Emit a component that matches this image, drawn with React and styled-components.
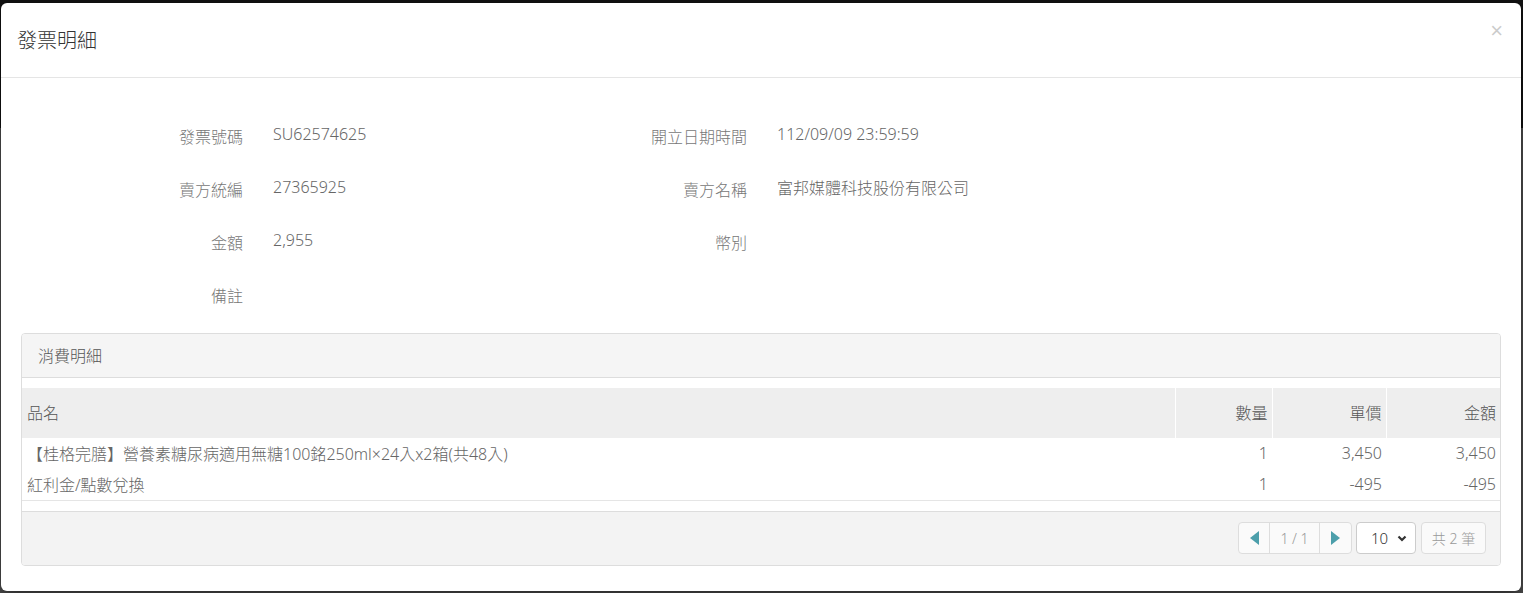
import styled, { createGlobalStyle } from "styled-components";

const GlobalStyle = createGlobalStyle`
  html, body {
    margin: 0;
    padding: 0;
  }
  body {
    background: linear-gradient(#121212 0, #121212 128px, #4e4e4e 128px);
    font-family: "Noto Sans", "Noto Sans CJK TC", sans-serif;
    font-weight: 300;
    color: #666;
  }
  * {
    box-sizing: border-box;
  }
`;

const info = [
  ["發票號碼", "SU62574625", "開立日期時間", "112/09/09 23:59:59"],
  ["賣方統編", "27365925", "賣方名稱", "富邦媒體科技股份有限公司"],
  ["金額", "2,955", "幣別", ""],
  ["備註", "", "", ""],
];

const items = [
  { name: "【桂格完膳】營養素糖尿病適用無糖100銘250ml×24入x2箱(共48入)", qty: 1, price: "3,450", amount: "3,450" },
  { name: "紅利金/點數兌換", qty: 1, price: "-495", amount: "-495" },
];

const App = () => {
  return (
    <>
      <GlobalStyle />
      <Backdrop>
        <Modal>
          <Header>
            <Title>發票明細</Title>
            <Close>×</Close>
          </Header>
          <Body>
            <InfoGrid>
              {info.map((row, i) => (
                <InfoRow key={i}>
                  <Label>{row[0]}</Label>
                  <Value>{row[1]}</Value>
                  <Label>{row[2]}</Label>
                  <Value>{row[3]}</Value>
                </InfoRow>
              ))}
            </InfoGrid>

            <Panel>
              <PanelHeading>消費明細</PanelHeading>
              <TableWrap>
                <Table>
                  <colgroup>
                    <col />
                    <col style={{ width: 97 }} />
                    <col style={{ width: 114 }} />
                    <col style={{ width: 114 }} />
                  </colgroup>
                  <thead>
                    <tr>
                      <Th>品名</Th>
                      <Th $right>數量</Th>
                      <Th $right>單價</Th>
                      <Th $right>金額</Th>
                    </tr>
                  </thead>
                  <tbody>
                    {items.map((it, i) => (
                      <Tr key={i}>
                        <Td>{it.name}</Td>
                        <Td $right>{it.qty}</Td>
                        <Td $right>{it.price}</Td>
                        <Td $right>{it.amount}</Td>
                      </Tr>
                    ))}
                  </tbody>
                </Table>
              </TableWrap>
              <PanelFooter>
                <Pager>
                  <PageBtn $w={30}>
                    <svg width="9" height="14" viewBox="0 0 9 14">
                      <polygon points="9,0 9,14 0,7" fill="#4c9fab" />
                    </svg>
                  </PageBtn>
                  <PageInfo>1 / 1</PageInfo>
                  <PageBtn $w={31}>
                    <svg width="9" height="14" viewBox="0 0 9 14">
                      <polygon points="0,0 0,14 9,7" fill="#4c9fab" />
                    </svg>
                  </PageBtn>
                </Pager>
                <SizeSelect>
                  <span>10</span>
                  <svg width="10" height="7" viewBox="0 0 10 7">
                    <polyline points="1.5,1.5 5,5 8.5,1.5" fill="none" stroke="#333" strokeWidth="2.2" />
                  </svg>
                </SizeSelect>
                <Count>共 2 筆</Count>
              </PanelFooter>
            </Panel>
          </Body>
        </Modal>
      </Backdrop>
    </>
  );
};

const Backdrop = styled.div`
  height: 593px;
  padding: 3px 2px 2px 1px;
`;

const Modal = styled.div`
  height: 588px;
  background: #fff;
  border-radius: 6px;
  box-shadow: 0 5px 15px rgba(0, 0, 0, 0.5);
  display: flex;
  flex-direction: column;
  overflow: hidden;
`;

const Header = styled.div`
  height: 75px;
  flex: none;
  display: flex;
  align-items: center;
  justify-content: space-between;
  padding: 0 18px 2px 16px;
  border-bottom: 1px solid #e5e5e5;
`;

const Title = styled.h4`
  margin: 0;
  font-size: 20px;
  font-weight: 300;
  color: #333;
`;

const Close = styled.span`
  align-self: flex-start;
  margin-top: 17px;
  font-size: 22px;
  line-height: 1;
  color: #000;
  opacity: 0.2;
  font-family: "Liberation Sans", sans-serif;
  font-weight: 400;
`;

const Body = styled.div`
  padding: 18px 20px 20px;
`;

const InfoGrid = styled.div`
  margin: 20px -15px 0;
  display: flex;
  flex-direction: column;
  gap: 15px;
`;

const InfoRow = styled.div`
  display: grid;
  grid-template-columns: 252px 252px 252px 1fr;
  height: 38px;
  align-items: center;
`;

const Label = styled.div`
  padding: 2px 15px 0;
  text-align: right;
  font-size: 16px;
  color: #777;
`;

const Value = styled.div`
  padding: 0 15px 2px;
  font-size: 16px;
  color: #666;
`;

const Panel = styled.div`
  margin-top: 20px;
  border: 1px solid #ddd;
  border-radius: 4px;
  overflow: hidden;
`;

const PanelHeading = styled.div`
  height: 44px;
  display: flex;
  align-items: center;
  padding: 0 16px 2px;
  background: #f5f5f5;
  border-bottom: 1px solid #ddd;
  font-size: 16px;
  color: #555;
`;

const TableWrap = styled.div`
  padding: 10px 0;
`;

const Table = styled.table`
  width: 100%;
  border-collapse: collapse;
  table-layout: fixed;
  font-size: 16px;
  color: #666;
`;

const Th = styled.th`
  height: 50px;
  background: #eee;
  font-weight: 300;
  color: #555;
  padding: 0 4px 2px 5px;
  text-align: ${(p) => (p.$right ? "right" : "left")};
  border-left: 1px solid #fff;
  &:first-child {
    border-left: none;
  }
`;

const Tr = styled.tr`
  &:last-child td {
    border-bottom: 1px solid #e5e5e5;
  }
`;

const Td = styled.td`
  height: 31px;
  padding: 0 4px 1px 5px;
  text-align: ${(p) => (p.$right ? "right" : "left")};
  white-space: nowrap;
`;

const PanelFooter = styled.div`
  height: 54px;
  display: flex;
  align-items: center;
  justify-content: flex-end;
  gap: 5px;
  padding: 0 14px 0;
  background: #f3f3f3;
  border-top: 1px solid #ddd;
`;

const Pager = styled.div`
  display: flex;
  height: 32px;
  border: 1px solid #ddd;
  border-radius: 4px;
  background: #fafafa;
  margin-right: -1px;
`;

const PageBtn = styled.div`
  width: ${(p) => p.$w}px;
  display: flex;
  align-items: center;
  justify-content: center;
`;

const PageInfo = styled.div`
  width: 51px;
  display: flex;
  align-items: center;
  justify-content: center;
  border-left: 1px solid #ddd;
  border-right: 1px solid #ddd;
  font-size: 14px;
  color: #999;
`;

const SizeSelect = styled.div`
  width: 60px;
  height: 32px;
  display: flex;
  align-items: center;
  justify-content: space-between;
  padding: 0 8px 0 14px;
  background: #fff;
  border: 1px solid #ccc;
  border-radius: 4px;
  font-size: 15px;
  color: #333;
`;

const Count = styled.div`
  width: 65px;
  height: 32px;
  display: flex;
  align-items: center;
  justify-content: center;
  background: #fafafa;
  border: 1px solid #ddd;
  border-radius: 4px;
  font-size: 14px;
  color: #999;
`;

export default App;
